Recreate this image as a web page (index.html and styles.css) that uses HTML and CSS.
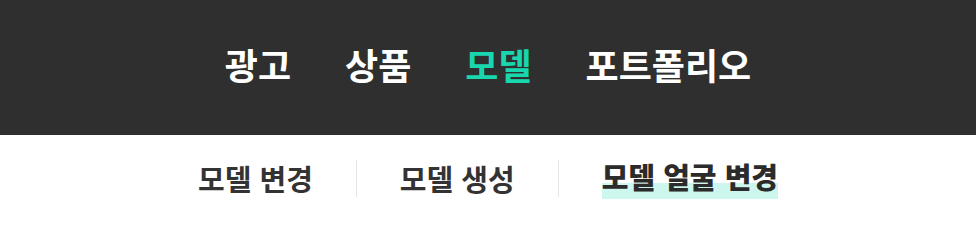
FILE: index.html
```html
<!DOCTYPE html>
<html lang="ko">
<head>
<meta charset="utf-8">
<link rel="stylesheet" href="styles.css">
</head>
<body>
<header class="top">
  <nav class="main-nav">
    <a class="main-item">광고</a>
    <a class="main-item">상품</a>
    <a class="main-item active">모델</a>
    <a class="main-item">포트폴리오</a>
  </nav>
</header>
<nav class="sub-nav">
  <a class="sub-item">모델 변경</a>
  <span class="divider"></span>
  <a class="sub-item">모델 생성</a>
  <span class="divider"></span>
  <a class="sub-item current"><span class="mark">모델 얼굴 변경</span></a>
</nav>
</body>
</html>
```
FILE: styles.css
```css
html, body {
  margin: 0;
  padding: 0;
  background: #ffffff;
  font-family: "Noto Sans CJK KR", "Noto Sans", sans-serif;
}
.top {
  height: 135px;
  background: #2f2f2f;
  display: flex;
  align-items: center;
  justify-content: center;
}
.main-nav {
  display: flex;
  gap: 54px;
  margin-top: -8px;
}
.main-item {
  font-size: 36px;
  font-weight: 700;
  color: #ffffff;
  line-height: 1;
}
.main-item.active {
  color: #18d6ae;
}
.sub-nav {
  display: flex;
  justify-content: center;
  align-items: center;
  padding-top: 23px;
}
.sub-item {
  font-size: 29px;
  font-weight: 700;
  color: #333333;
  line-height: 37px;
  padding: 0 43px;
}
.sub-item.current {
  font-weight: 900;
  color: #2b2b2b;
}
.divider {
  width: 1px;
  height: 37px;
  background: #e5e5e5;
}
.mark {
  background: linear-gradient(to bottom, transparent 0, transparent 25px, #cdf7ee 25px, #cdf7ee 41px, transparent 41px);
  display: inline-block;
  line-height: 37px;
  height: 41px;
}
```
